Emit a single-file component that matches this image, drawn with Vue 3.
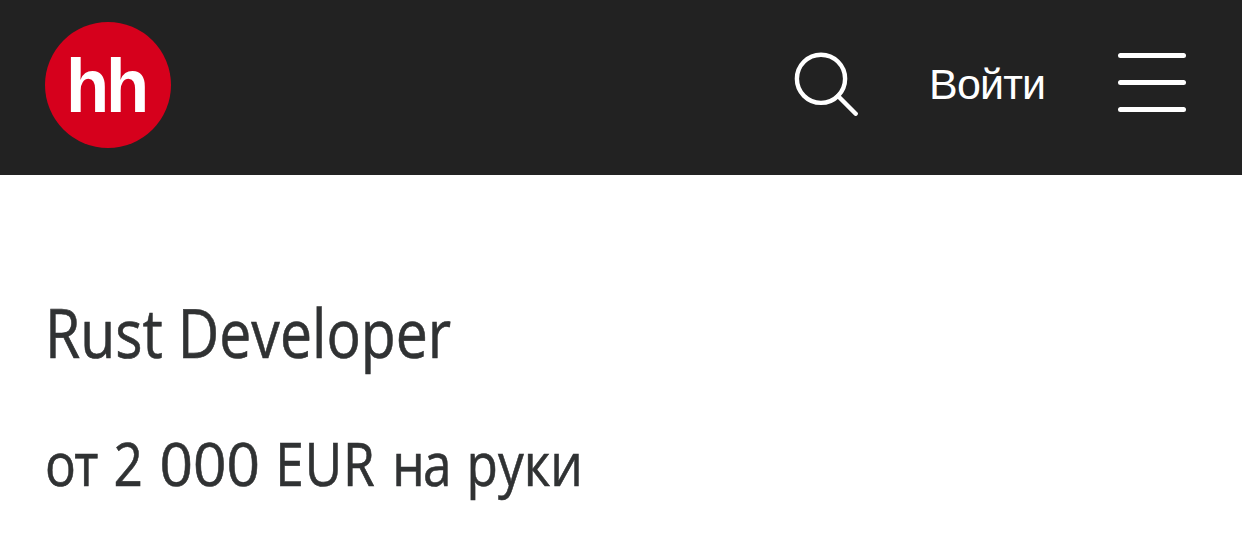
<script setup>
import { ref } from 'vue'

const title = ref('Rust Developer')
</script>

<template>
  <div class="page">
    <header class="header">
      <a class="logo"><span class="logo-text">hh</span></a>
      <nav class="nav">
        <svg class="search" viewBox="0 0 64 64">
          <circle cx="27" cy="26.8" r="24.1" />
          <path d="M44 44L61.7 61.7" />
        </svg>
        <a class="login">Войти</a>
        <button class="menu">
          <span></span>
          <span></span>
          <span></span>
        </button>
      </nav>
    </header>
    <main class="vacancy">
      <h1 class="title">{{ title }}</h1>
      <p class="salary"><span class="from">от</span> 2 <span class="digits">000</span> <span class="currency">EUR</span> <span class="net">на</span> руки</p>
    </main>
  </div>
</template>

<style>
body {
  background: #fff;
}
</style>

<style scoped>
.page {
  height: 556px;
  overflow: hidden;
  color: #303233;
  font-family: 'Open Sans', sans-serif;
}

.header {
  display: flex;
  align-items: flex-start;
  justify-content: space-between;
  box-sizing: border-box;
  height: 175px;
  padding: 22px 56px 0 45px;
  background: #222;
  color: #fff;
}

.logo {
  box-sizing: border-box;
  width: 126px;
  height: 126px;
  padding-left: 21px;
  border-radius: 50%;
  background: #d6001c;
}

.logo-text {
  display: inline-block;
  font: bold 76px/128px 'Liberation Sans', Arial, sans-serif;
  letter-spacing: -3.4px;
  transform: scaleX(0.93);
  transform-origin: 0 0;
}

.nav {
  display: flex;
  align-items: flex-start;
  padding-top: 30px;
}

.search {
  width: 64px;
  height: 64px;
  margin-right: 71px;
  fill: none;
  stroke: #fff;
  stroke-width: 4.4;
  stroke-linecap: round;
}

.login {
  width: 117px;
  margin-right: 72px;
  font: 43px/64px 'Liberation Sans', Arial, sans-serif;
  letter-spacing: -0.8px;
}

.menu {
  display: flex;
  flex-direction: column;
  gap: 22px;
  width: 68px;
  padding: 1px 0 0;
  border: none;
  background: none;
}

.menu span {
  width: 100%;
  height: 5px;
  border-radius: 2.5px;
  background: #fff;
}

.vacancy {
  padding: 111px 45px 0;
}

.title,
.salary {
  margin: 0;
  font-weight: 400;
  white-space: nowrap;
  transform-origin: 0 0;
  -webkit-text-stroke: 0.6px #303233;
}

.title {
  font-size: 67px;
  line-height: 92px;
  transform: scaleX(0.853);
}

.salary {
  margin-top: 43px;
  font-size: 61px;
  line-height: 84px;
  word-spacing: 4px;
  transform: scaleX(0.842);
}

.from,
.net {
  letter-spacing: -2px;
}

.digits {
  display: inline-block;
  margin-right: 13px;
  transform: scaleX(1.14);
  transform-origin: 0 0;
}

.currency {
  letter-spacing: 1px;
}
</style>
